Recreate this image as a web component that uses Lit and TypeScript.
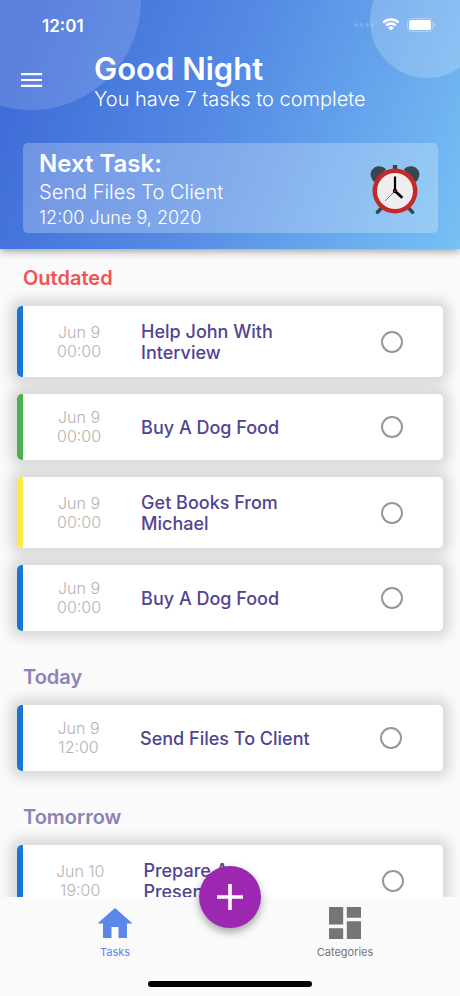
import { LitElement, html, css, svg } from "lit";
import { customElement, property, state } from "lit/decorators.js";
import { classMap } from "lit/directives/class-map.js";

type Accent = "blue" | "green" | "yellow";

interface Task {
  id: string;
  day: string;
  time: string;
  title: string;
  accent: Accent;
}

interface Group {
  name: string;
  late?: boolean;
  tasks: Task[];
}

const GROUPS: Group[] = [
  {
    name: "Outdated",
    late: true,
    tasks: [
      { id: "t1", day: "Jun 9", time: "00:00", title: "Help John With Interview", accent: "blue" },
      { id: "t2", day: "Jun 9", time: "00:00", title: "Buy A Dog Food", accent: "green" },
      { id: "t3", day: "Jun 9", time: "00:00", title: "Get Books From Michael", accent: "yellow" },
      { id: "t4", day: "Jun 9", time: "00:00", title: "Buy A Dog Food", accent: "blue" },
    ],
  },
  {
    name: "Today",
    tasks: [{ id: "t5", day: "Jun 9", time: "12:00", title: "Send Files To Client", accent: "blue" }],
  },
  {
    name: "Tomorrow",
    tasks: [{ id: "t6", day: "Jun 10", time: "19:00", title: "Prepare A Presentation", accent: "blue" }],
  },
];

@customElement("task-card")
class TaskCard extends LitElement {
  @property({ attribute: false }) task!: Task;

  static styles = css`
    :host {
      display: block;
      position: relative;
    }
    /* The shadow sits on its own layer so it never falls on a neighbouring card. */
    :host::before {
      content: "";
      position: absolute;
      inset: 0;
      z-index: -1;
      border-radius: 5px;
      box-shadow: 0 0 12px 7px rgba(0, 0, 0, 0.13);
    }
    .card {
      display: flex;
      align-items: center;
      justify-content: space-evenly;
      overflow: hidden;
      border-radius: 5px;
      border-left: 6px solid #1976d2;
      background: #fff;
    }
    .green {
      border-left-color: #4caf50;
    }
    .yellow {
      border-left-color: #ffeb3b;
    }
    .when {
      padding: 14px 7px;
      font-size: 16px;
      font-weight: 300;
      line-height: 19px;
      text-align: center;
      color: #b4b4b4;
    }
    .when span {
      display: block;
    }
    .title {
      box-sizing: border-box;
      width: 49%;
      padding: 15px 6px 14px;
      font-size: 18px;
      font-weight: 500;
      line-height: 21px;
      color: #4f4590;
    }
    .title span {
      display: block;
      max-width: 180px;
    }
    .done {
      appearance: none;
      flex: none;
      width: 22px;
      height: 22px;
      margin: 0 13px;
      border: 2px solid #979797;
      border-radius: 50%;
      background: transparent;
      cursor: pointer;
    }
    .done:checked {
      background: #979797;
    }
  `;

  render() {
    const { id, day, time, title, accent } = this.task;
    return html`
      <div class=${classMap({ card: true, [accent]: true })}>
        <div class="when"><span>${day}</span><span>${time}</span></div>
        <label class="title" for=${id}><span>${title}</span></label>
        <input class="done" type="checkbox" id=${id} />
      </div>
    `;
  }
}

const wifiIcon = svg`
  <svg width="18" height="14" viewBox="0 0 18 14" fill="#fff" aria-hidden="true">
    <path d="M9 2.700c2.400 0 4.700.9 6.500 2.600.1.1.3.1.5 0l1.300-1.300c.1-.1.1-.4 0-.5C12.700-.9 5.300-.9.7 3.500c-.1.1-.1.4 0 .5L2 5.300c.2.1.4.1.5 0C4.300 3.600 6.600 2.700 9 2.700z"/>
    <path d="M9 6.900c1.300 0 2.600.5 3.500 1.400.2.1.4.1.5 0l1.300-1.400c.2-.1.2-.3 0-.5-3-2.800-7.600-2.800-10.600 0-.2.2-.2.4 0 .5L5 8.300c.1.1.3.1.5 0 .9-.9 2.200-1.400 3.500-1.400z"/>
    <path d="M11.600 9.900c.1-.1.1-.4 0-.5a4 4 0 0 0-5.200 0c-.1.1-.1.4 0 .5l2.300 2.400c.200.2.4.2.6 0z"/>
  </svg>`;

const batteryIcon = svg`
  <svg width="29" height="14" viewBox="0 0 29 14" aria-hidden="true">
    <rect x=".5" y=".5" width="25" height="13" rx="4" fill="none" stroke="#fff" stroke-opacity=".35"/>
    <rect x="2" y="2" width="22" height="10" rx="2.500" fill="#fff"/>
    <path d="M27 4.800v4.400c1.700-.7 1.700-3.700 0-4.400z" fill="#fff" fill-opacity=".5"/>
  </svg>`;

const dotsIcon = svg`
  <svg width="20" height="6" viewBox="0 0 20 6" fill="#fff" fill-opacity=".16" aria-hidden="true">
    <rect x="0" y="1" width="3" height="4" rx="1"/>
    <rect x="5" y="1" width="3" height="4" rx="1"/>
    <rect x="11" y="1" width="3" height="4" rx="1"/>
    <rect x="16" y="1" width="3" height="4" rx="1"/>
  </svg>`;

const menuIcon = svg`
  <svg width="21" height="14" viewBox="0 0 21 14" fill="#fff" aria-hidden="true">
    <path d="M0 0h21v2.200H0zM0 5.900h21v2.200H0zM0 11.800h21V14H0z"/>
  </svg>`;

const clockIcon = svg`
  <svg width="50" height="50" viewBox="0 0 50 50" aria-hidden="true">
    <g fill="#37474f">
      <path d="M4.200 17.200C-.6 11.600-.3 6.400 3.600 3.200 7.500.1 13 .9 16.200 4.600z"/>
      <path d="M45.800 17.200c4.800-5.600 4.500-10.800.6-14C42.500.1 37 .9 33.800 4.600z"/>
      <path d="M22.800 0h4.400v5h-4.400z"/>
    </g>
    <path d="M12 42.500l-4.600 4.700M38 42.500l4.600 4.700" stroke="#37474f" stroke-width="3.600" stroke-linecap="round"/>
    <circle cx="25" cy="26" r="22.500" fill="#c62828"/>
    <circle cx="25" cy="26" r="18" fill="#eee"/>
    <path d="M25 26V11.500" stroke="#000" stroke-width="2.200"/>
    <path d="M25 26l7.300 6.800" stroke="#000" stroke-width="2.700"/>
    <path d="M26 25L15 36" stroke="#d84a3c" stroke-width="1"/>
    <circle cx="25" cy="26" r="2.200" fill="#000"/>
    <circle cx="25" cy="26" r=".9" fill="#c62828"/>
  </svg>`;

const homeIcon = svg`
  <svg width="34" height="32" viewBox="0 0 34 32" fill="currentColor" aria-hidden="true">
    <path d="M13.500 31V20h7v11h8.500V16.500H34.500L17 1-.5 16.500H5V31z"/>
  </svg>`;

const boardIcon = svg`
  <svg width="32" height="32" viewBox="0 0 32 32" fill="currentColor" aria-hidden="true">
    <path d="M0 0h14.200v17.600H0zM0 21.300h14.200V32H0zM17.800 0H32v10.700H17.800zM17.800 14.300H32V32H17.800z"/>
  </svg>`;

const plusIcon = svg`
  <svg width="26" height="26" viewBox="0 0 26 26" aria-hidden="true">
    <path d="M13 0v26M0 13h26" stroke="#fff" stroke-width="3.600"/>
  </svg>`;

@customElement("app-root")
class AppRoot extends LitElement {
  @state() private tab = "Tasks";

  static styles = css`
    :host {
      display: flex;
      flex-direction: column;
      height: 100vh;
      overflow: hidden;
      background: #fafafa;
      font-family: Inter, "Liberation Sans", sans-serif;
    }
    h1,
    h2,
    p {
      margin: 0;
    }
    button {
      padding: 0;
      border: 0;
      background: none;
      font: inherit;
      cursor: pointer;
    }
    svg {
      display: block;
    }
    .top {
      position: relative;
      z-index: 1;
      flex: none;
      padding-bottom: 16px;
      color: #fff;
      background: linear-gradient(112deg, #3f6cd8 8%, #558be4 48%, #77c1f4 100%);
      box-shadow: 0 2px 8px rgba(0, 0, 0, 0.4);
    }
    .bubbles {
      position: absolute;
      inset: 0;
      overflow: hidden;
    }
    .bubble {
      position: absolute;
      border-radius: 50%;
      background: rgba(255, 255, 255, 0.15);
    }
    .bubble.left {
      top: -110px;
      left: -79px;
      width: 220px;
      height: 220px;
    }
    .bubble.right {
      top: -36px;
      right: -24px;
      width: 114px;
      height: 114px;
      background: rgba(255, 255, 255, 0.2);
    }
    .status,
    .greeting,
    .next {
      position: relative;
      display: flex;
      align-items: center;
    }
    .status {
      height: 50px;
      padding: 0 24px 0 42px;
      gap: 7px;
    }
    .time {
      flex: 1;
      padding-top: 1px;
      font-size: 17px;
      font-weight: 600;
    }
    .greeting {
      padding-left: 21px;
    }
    .menu {
      width: 21px;
      height: 48px;
      margin-right: 52px;
    }
    .hello {
      font-size: 31px;
      font-weight: 600;
      line-height: 38px;
    }
    .count {
      font-size: 20px;
      font-weight: 300;
      line-height: 22px;
    }
    .next {
      justify-content: space-between;
      margin: 33px 22px 0 23px;
      padding: 6px 18px 3px 16px;
      border-radius: 5px;
      background: rgba(255, 255, 255, 0.25);
    }
    .next h2 {
      font-size: 24px;
      font-weight: 600;
      line-height: 29px;
    }
    .what {
      font-size: 20px;
      font-weight: 300;
      line-height: 28px;
    }
    .date {
      font-size: 18px;
      font-weight: 300;
      line-height: 24px;
    }
    .list {
      flex: 1;
      min-height: 0;
      overflow: hidden auto;
      scrollbar-width: none;
    }
    .group {
      position: relative;
      z-index: 0;
      display: flex;
      flex-direction: column;
      gap: 17px;
      padding: 17px;
    }
    .group h2 {
      margin: 0 0 -1px 6px;
      font-size: 20px;
      font-weight: 600;
      line-height: 24px;
      color: #8a84b4;
    }
    .group .late {
      color: #f05454;
    }
    .nav {
      position: relative;
      z-index: 1;
      flex: none;
      display: grid;
      grid-template-columns: 1fr 1fr;
      background: #fafafa;
    }
    .tab {
      display: flex;
      flex-direction: column;
      align-items: center;
      gap: 6px;
      padding-top: 10px;
      font-size: 11px;
      line-height: 14px;
      color: #757575;
    }
    .tab.active {
      color: #5c86e8;
    }
    .add {
      position: absolute;
      top: -31px;
      left: 50%;
      display: grid;
      place-items: center;
      width: 62px;
      height: 62px;
      margin-left: -31px;
      border-radius: 50%;
      background: #9c27b0;
      box-shadow: 0 4px 8px rgba(0, 0, 0, 0.35);
    }
    .grip {
      grid-column: 1 / -1;
      justify-self: center;
      width: 164px;
      height: 6px;
      margin: 22px 0 9px;
      border-radius: 3px;
      background: #000;
    }
  `;

  private tabButton(name: string, icon: unknown) {
    return html`
      <button
        class=${classMap({ tab: true, active: this.tab === name })}
        @click=${() => (this.tab = name)}
      >
        ${icon}<span>${name}</span>
      </button>
    `;
  }

  render() {
    return html`
      <header class="top">
        <div class="bubbles">
          <div class="bubble left"></div>
          <div class="bubble right"></div>
        </div>
        <div class="status">
          <span class="time">12:01</span>
          ${dotsIcon}${wifiIcon}${batteryIcon}
        </div>
        <div class="greeting">
          <button class="menu" aria-label="Menu">${menuIcon}</button>
          <div>
            <h1 class="hello">Good Night</h1>
            <p class="count">You have 7 tasks to complete</p>
          </div>
        </div>
        <section class="next">
          <div>
            <h2>Next Task:</h2>
            <p class="what">Send Files To Client</p>
            <p class="date">12:00 June 9, 2020</p>
          </div>
          ${clockIcon}
        </section>
      </header>
      <main class="list">
        ${GROUPS.map(
          (group) => html`
            <section class="group">
              <h2 class=${classMap({ late: !!group.late })}>${group.name}</h2>
              ${group.tasks.map((task) => html`<task-card .task=${task}></task-card>`)}
            </section>
          `,
        )}
      </main>
      <nav class="nav">
        ${this.tabButton("Tasks", homeIcon)}${this.tabButton("Categories", boardIcon)}
        <button class="add" aria-label="Add task">${plusIcon}</button>
        <div class="grip"></div>
      </nav>
    `;
  }
}
